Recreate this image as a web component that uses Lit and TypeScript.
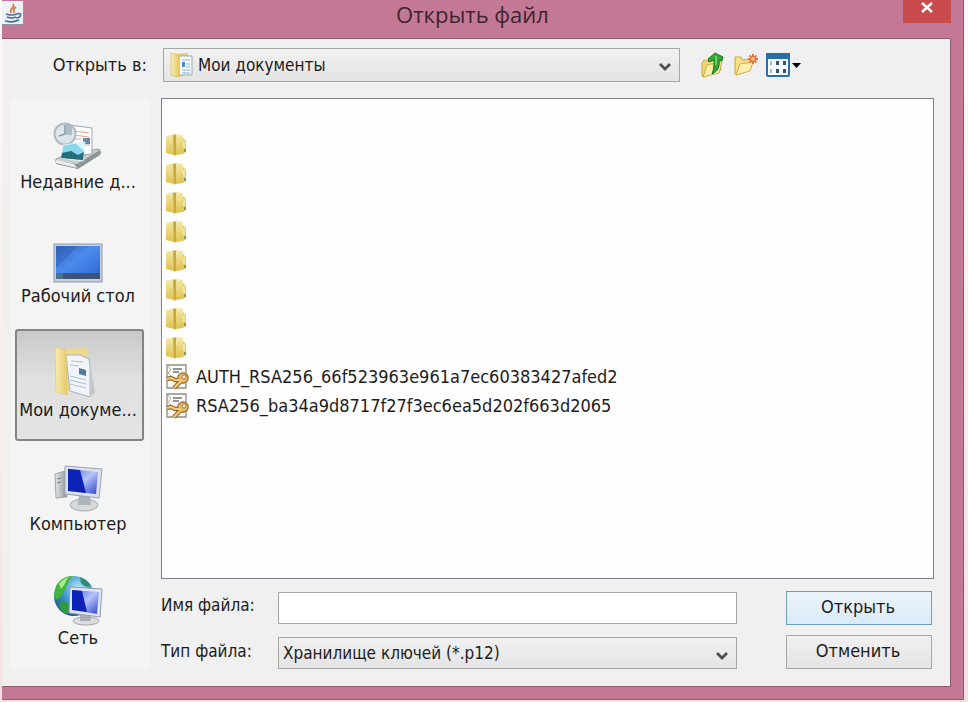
import { LitElement, html, css, svg } from "lit";
import { customElement, state } from "lit/decorators.js";

const defs = html`<svg class="defs" width="0" height="0" aria-hidden="true">
  <defs>
    <linearGradient id="gold" x1="0" x2="1" y1="0" y2="0">
      <stop offset="0" stop-color="#f9edb4" /><stop offset="1" stop-color="#e8ca66" />
    </linearGradient>
    <linearGradient id="screen" x1="0" x2="1" y1="0" y2="1">
      <stop offset="0" stop-color="#3a68c0" /><stop offset=".45" stop-color="#4b8bee" /><stop offset="1" stop-color="#2a63cf" />
    </linearGradient>
    <linearGradient id="glass" x1="0" x2="1" y1="0" y2="1">
      <stop offset="0" stop-color="#4a66dc" /><stop offset=".5" stop-color="#b4c4f8" /><stop offset="1" stop-color="#2d44cc" />
    </linearGradient>
    <linearGradient id="steel" x1="0" x2="1" y1="0" y2="0">
      <stop offset="0" stop-color="#e8eaec" /><stop offset="1" stop-color="#8b9196" />
    </linearGradient>
    <linearGradient id="flap" x1="0" x2="0" y1="0" y2="1">
      <stop offset="0" stop-color="#f4eaa8" /><stop offset="1" stop-color="#dfc04e" />
    </linearGradient>
    <radialGradient id="sea" cx=".6" cy=".3" r=".75">
      <stop offset="0" stop-color="#b4e8fa" /><stop offset=".5" stop-color="#4397cf" /><stop offset="1" stop-color="#17548f" />
    </radialGradient>
  </defs>
</svg>`;

const recentArt = svg`
  <path d="M3 41 16 35 46 31 48 35 24 50 3 45Z" fill="#c9cdcf" stroke="#9a9ea0"/>
  <path d="M24 46 47 32V37L25 51 3 46V43Z" fill="#8f9496"/>
  <path d="M16 7 39 10 39 36 20 38Z" fill="#fbfdfe" stroke="#9cabb5"/>
  <path d="M21 13 36 15M21 17 36 19M22 21 28 21M30 27 37 27" stroke="#e2a58c"/>
  <path d="M30 20h7v6h-7z" fill="#6788a4"/>
  <circle cx="12" cy="16" r="10.5" fill="#dde5ea" stroke="#b0bac1" stroke-width="2"/>
  <path d="M12 7V16L6 18" fill="none" stroke="#8e9eaa" stroke-width="1.6"/>
  <path d="M13 6A10 10 0 0 1 19 9V17H13Z" fill="#7f97a6" opacity=".5"/>
  <path d="M10 27 32 24 30 43 8 40Z" fill="#8bd5ed" stroke="#e3f4fa"/>
  <path d="M9 35 18 33 25 37 31 34 30 42 8 40Z" fill="#246e75"/>
  <path d="M22 25 31 24 31 33Z" fill="#d7f5fc"/>
  <path d="M3 42 21 46 24 50 3 45Z" fill="#e9ebec"/>`;

const desktopArt = svg`
  <rect x="1" y="12" width="48" height="38" fill="#c8d0dc" stroke="#8f99a9"/>
  <rect x="3" y="14" width="44" height="33" fill="url(#screen)"/>
  <path d="M3 14H25L3 36Z" fill="#234f9e" opacity=".3"/>
  <rect x="3" y="41" width="44" height="6" fill="#3d5478"/>
  <rect x="3" y="41" width="7" height="6" fill="#4f708e"/>`;

const documentsArt = svg`
  <path d="M8 3 35 2V10L24 45 7 44Z" fill="#ecd78c"/>
  <path d="M13 9 27 9 36 13 37 21V51L17 45Z" fill="#f1f5f9" stroke="#a7b6be"/>
  <path d="M18 15 30 16M17 19 26 20M17 30 33 34M17 34 33 38M17 38 33 42" stroke="#aebfcc"/>
  <path d="M26 22 33 24V30L26 28Z" fill="#527b93"/>
  <path d="M2 1 13 4 14 49 3 46Z" fill="url(#gold)" stroke="#dcc376" stroke-width=".6"/>
  <path d="M38 24 42 46 38 51Z" fill="#777" opacity=".25"/>`;

const computerArt = svg`
  <path d="M2 14 12 11 14 37 3 38Z" fill="url(#steel)" stroke="#a1a6aa"/>
  <path d="M4 19 8 18M4 23 8 22" stroke="#70777c"/>
  <ellipse cx="31" cy="45" rx="14" ry="6" fill="#d7dadd" stroke="#a4a9ad"/>
  <path d="M26 35 37 37 38 45H25Z" fill="#aeb3b8"/>
  <path d="M12 6 49 9 46 38 12 34Z" fill="#dce1ec" stroke="#9aa3b8"/>
  <path d="M15 9 45 12 43 34 15 31Z" fill="url(#glass)"/>
  <path d="M15 9 27 10 33 33 15 31Z" fill="#0d22b6"/>`;

const networkArt = svg`
  <circle cx="21" cy="22" r="20" fill="url(#sea)"/>
  <path d="M3 12C7 5 13 2 20 2 18 5 14 6 15 10 11 14 12 19 7 23 4 27 2 26 1 22Z" fill="#43b53b"/>
  <path d="M6 29C11 26 16 28 17 33 15 37 16 41 13 40 8 37 6 34 6 29Z" fill="#2c9a3d"/>
  <path d="M27 3C32 5 36 8 38 12 33 14 30 11 28 9Z" fill="#318c74"/>
  <path d="M6 10C9 6 12 4 16 3 12 7 13 10 8 15Z" fill="#a4ed88"/>
  <ellipse cx="33" cy="47" rx="13" ry="4" fill="#dadcdf" stroke="#a5a9ad"/>
  <path d="M27 40 37 41 38 47H27Z" fill="#aaafb4"/>
  <path d="M17 13 49 15 47 43 16 39Z" fill="#e0e5ef" stroke="#929cb1"/>
  <path d="M19 16 46 18 44 40 19 36Z" fill="url(#glass)"/>
  <path d="M19 16 29 17 34 38 19 36Z" fill="#0d22b6"/>`;

const folderIcon = html`<svg class="file-icon" viewBox="0 0 24 26" aria-hidden="true">
  <path d="M1 4 9 2V23L1 21Z" fill="url(#flap)"/>
  <path d="M8 3 12 2V22L9 24Z" fill="#c9a83e"/>
  <path d="M11 2 18 3V22L11 23Z" fill="url(#flap)"/>
  <path d="M18 6 21 9V20L18 22Z" fill="#e3ca66"/>
  <path d="M19 9V16" stroke="#f8f0bc" stroke-width="1.4"/>
  <path d="M20 17V20" stroke="#6d8b4c" stroke-width="1.5"/>
</svg>`;

const keyIcon = html`<svg class="file-icon" viewBox="0 0 24 26" aria-hidden="true">
  <path d="M2 1H21V24H2Z" fill="#fbfbf8" stroke="#8f8c80" stroke-width="1.3"/>
  <path d="M8 5H17M8 8H14" stroke="#6f757a" stroke-width="1.3"/>
  <path d="M3 2 6 6 3 9 6 12" fill="none" stroke="#b2b2aa"/>
  <path d="M2 15 6 14 10 16 15 16M9 24 17 16" fill="none" stroke="#94662c" stroke-width="4.4" stroke-linejoin="round"/>
  <circle cx="18" cy="14" r="5.200" fill="#eab964" stroke="#94662c" stroke-width="1.2"/>
  <path d="M2 15 6 14 10 16 15 16M9 24 17 16" fill="none" stroke="#f3c97c" stroke-width="2.2"/>
  <circle cx="19" cy="13" r="2" fill="#fff5d8" stroke="#94662c" stroke-width=".8"/>
</svg>`;

const chevron = html`<svg class="chevron" viewBox="0 0 12 10" aria-hidden="true">
  <path d="M1 2 6 7 11 2" fill="none" stroke="#505050" stroke-width="2.8"/>
</svg>`;

interface Place {
  id: string;
  label: string;
  art: unknown;
}

const places: Place[] = [
  { id: "recent", label: "Недавние д...", art: recentArt },
  { id: "desktop", label: "Рабочий стол", art: desktopArt },
  { id: "documents", label: "Мои докуме...", art: documentsArt },
  { id: "computer", label: "Компьютер", art: computerArt },
  { id: "network", label: "Сеть", art: networkArt },
];

const files = [
  "AUTH_RSA256_66f523963e961a7ec60383427afed2",
  "RSA256_ba34a9d8717f27f3ec6ea5d202f663d2065",
];

@customElement("app-root")
export class AppRoot extends LitElement {
  @state() private place = "documents";

  static styles = css`
    :host {
      display: flex;
      box-sizing: border-box;
      min-height: 100vh;
      padding: 0 4px 4px 2px;
      background: linear-gradient(#fdf8fa, #fdf0ee 40%, #f8e0df);
      color: #1c1c1c;
      font: 17px/20px "DejaVu Sans Condensed", "Noto Sans", sans-serif;
    }
    * { box-sizing: border-box; }
    button, input, select { font: inherit; color: inherit; margin: 0; border-radius: 0; }
    .defs { position: absolute; }
    .window {
      flex: 1;
      min-width: 0;
      display: flex;
      flex-direction: column;
      padding: 0 12px 12px 0;
      background: #c37895;
      border: solid #8f5b70;
      border-width: 0 1px 1px 0;
    }
    .titlebar {
      display: grid;
      grid-template-columns: 48px 1fr 48px;
      align-items: start;
      height: 38px;
    }
    .java { width: 22px; height: 25px; }
    .title {
      margin: 0;
      padding-right: 8px;
      font: 22px/28px "Open Sans", sans-serif;
      text-align: center;
      color: #3b2630;
    }
    .close {
      height: 23px;
      padding: 0;
      border: 0;
      background: #c94b4e;
      display: flex;
      justify-content: center;
    }
    .close svg { width: 14px; height: 16px; }
    .client {
      flex: 1;
      display: grid;
      grid-template-columns: 138px 1fr;
      grid-template-rows: 34px 1fr;
      column-gap: 12px;
      row-gap: 16px;
      padding: 9px 16px 17px 9px;
      background: #f0f0f0;
      border: solid #8f5b70;
      border-width: 1px 1px 1px 0;
    }
    .look-label { align-self: center; text-align: right; padding-right: 2px; font-size: 18px; }
    .toolbar { display: flex; align-items: center; padding-left: 2px; }
    .combo { position: relative; flex: 1; height: 34px; }
    .combo select {
      width: 100%;
      height: 100%;
      padding: 0 36px 0 4px;
      appearance: none;
      border: 1px solid #a6a6a6;
      background: linear-gradient(#f1f1f1, #e4e4e4);
    }
    .combo .with-icon { padding-left: 34px; }
    .combo-icon { position: absolute; left: 7px; top: 4px; width: 25px; height: 26px; pointer-events: none; }
    .chevron { position: absolute; right: 9px; top: 14px; width: 12px; height: 10px; pointer-events: none; }
    .tools { display: flex; align-items: center; gap: 8px; width: 254px; padding-left: 20px; }
    .tool { padding: 0; border: 0; background: none; display: flex; }
    .tool svg { width: 25px; height: 26px; }
    .tool .wide { width: 36px; }
    .places {
      display: flex;
      flex-direction: column;
      gap: 2px;
      padding: 3px 5px 0 4px;
      background: #f4f4f4;
    }
    .place {
      display: flex;
      flex-direction: column;
      align-items: center;
      gap: 2px;
      height: 112px;
      padding: 16px 3px 0 0;
      border: 1px solid transparent;
      background: none;
      font-size: 18px;
      white-space: nowrap;
    }
    .place svg { width: 50px; height: 52px; }
    .place.selected {
      border: 2px solid #858585;
      padding-top: 15px;
      border-radius: 3px;
      background: linear-gradient(#c9c9c9, #e0e0e0 45%, #e4e4e4);
    }
    .main { display: flex; flex-direction: column; gap: 12px; min-width: 0; }
    .files {
      flex: 1;
      margin: 0;
      padding: 31px 3px;
      list-style: none;
      background: #fefefe;
      border: 1px solid #7d8087;
      font-size: 18px;
    }
    .file { display: flex; align-items: center; gap: 7px; height: 29px; }
    .file-icon { width: 24px; height: 26px; }
    .form { display: flex; gap: 49px; padding-right: 2px; }
    .fields {
      flex: 1;
      display: grid;
      grid-template-columns: 117px 1fr;
      grid-template-rows: 34px 32px;
      row-gap: 12px;
      align-items: center;
    }
    .fields label { align-self: start; padding-top: 4px; }
    .fields .combo { height: 32px; }
    .fields input { width: 100%; height: 32px; padding: 0 5px; border: 1px solid #a6a6a6; background: #fff; }
    .actions { display: flex; flex-direction: column; gap: 10px; width: 146px; }
    .action { height: 34px; padding: 0 2px 2px 0; border: 1px solid #a6a6a6; background: linear-gradient(#f1f1f1, #e4e4e4); font-size: 18px; }
    .action.primary { border-color: #6f9fba; background: linear-gradient(#ecf4fa, #d9ebf7); }
  `;

  render() {
    return html`${defs}
      <main class="window">
        <header class="titlebar">
          <svg class="java" viewBox="0 0 22 25" aria-hidden="true">
            <path d="M0 1H22V25H0Z" fill="#edf2f6" />
            <path d="M22 1V25H0" fill="none" stroke="#75788a" stroke-width="1.5" />
            <path d="M11 4C14 7 7 8 9 13M14 7C10 9 12 11 12 13" fill="none" stroke="#db7838" stroke-width="1.6" />
            <path d="M4 14Q9 16 15 14M5 17Q10 19 14 17M3 21Q10 23 17 20" fill="none" stroke="#426f94" stroke-width="1.7" />
            <path d="M15 14C21 12 19 18 14 18" fill="none" stroke="#426f94" stroke-width="1.5" />
          </svg>
          <h1 class="title">Открыть файл</h1>
          <button class="close" aria-label="Закрыть">
            <svg viewBox="0 0 14 16" aria-hidden="true"><path d="M2 3 12 12M12 3 2 12" stroke="#fff" stroke-width="2.4" /></svg>
          </button>
        </header>
        <div class="client">
          <label class="look-label" for="look">Открыть в:</label>
          <div class="toolbar">
            <div class="combo">
              <select id="look" class="with-icon"><option>Мои документы</option></select>
              <svg class="combo-icon" viewBox="0 0 25 26" aria-hidden="true">
                <path d="M2 2 18 1V22L9 25 2 24Z" fill="#e8d077" />
                <path d="M9 4 22 4V23H9Z" fill="#f6fafc" stroke="#9aaab4" />
                <path d="M12 8H20M16 12H20M16 15H20M12 18H20M12 21H20" stroke="#8fb0cc" />
                <path d="M12 10H15V15H12Z" fill="#4b8cc4" />
                <path d="M1 1 9 3V25L1 23Z" fill="url(#gold)" stroke="#d5b856" stroke-width=".6" />
              </svg>
              ${chevron}
            </div>
            <div class="tools">
              <button class="tool" aria-label="На один уровень вверх">
                <svg viewBox="0 0 25 26" aria-hidden="true">
                  <path d="M2 11 4 8 8 9 10 7 20 6 21 18 4 25 2 24Z" fill="#f2d778" stroke="#c9a443" />
                  <path d="M3 25 7 13 22 10 19 21Z" fill="#fbedaa" stroke="#cfab4b" />
                  <path d="M8 7 15 1 23 5 22 9 19 8C20 15 18 19 12 22 14 17 14 13 14 8L9 10Z" fill="#37a534" stroke="#167826" />
                  <path d="M16 4V13" stroke="#7cdc70" stroke-width="1.6" />
                </svg>
              </button>
              <button class="tool" aria-label="Создать папку">
                <svg viewBox="0 0 25 26" aria-hidden="true">
                  <path d="M2 5H8L10 8 17 7V12L4 23 2 22Z" fill="#f5de8a" stroke="#c9a443" />
                  <path d="M3 23 7 12 20 10 17 19Z" fill="#fcefae" stroke="#d3ad4c" />
                  <path d="M20 2V12M15 7H25M16.500 3.500 23.500 10.500M23.500 3.500 16.500 10.500" stroke="#e4753f" stroke-width="2" />
                  <circle cx="20" cy="7" r="1.8" fill="#ffc27a" />
                </svg>
              </button>
              <button class="tool" aria-label="Вид">
                <svg class="wide" viewBox="0 0 36 26" aria-hidden="true">
                  <rect x="1" y="2" width="22" height="22" rx="1" fill="#f7fbff" stroke="#256fac" stroke-width="2" />
                  <rect x="0" y="1" width="24" height="6" rx="1" fill="#256fac" />
                  <path d="M5 9V13M5 17V21" stroke="#8da5a5" stroke-width="1.5" />
                  <path d="M10 9H13V13H10ZM17 9H20V13H17ZM10 17H13V21H10ZM17 17H20V21H17Z" fill="#34576b" />
                  <path d="M26 11H35L30.500 16Z" fill="#000" />
                </svg>
              </button>
            </div>
          </div>
          <nav class="places">
            ${places.map(
              (p) => html`<button
                class="place ${p.id === this.place ? "selected" : ""}"
                @click=${() => (this.place = p.id)}
              >
                <svg viewBox="0 0 50 52" aria-hidden="true">${p.art}</svg>
                <span>${p.label}</span>
              </button>`
            )}
          </nav>
          <div class="main">
            <ul class="files">
              ${Array.from({ length: 8 }, () => html`<li class="file">${folderIcon}</li>`)}
              ${files.map((f) => html`<li class="file">${keyIcon}<span>${f}</span></li>`)}
            </ul>
            <form class="form" @submit=${(e: Event) => e.preventDefault()}>
              <div class="fields">
                <label for="name">Имя файла:</label>
                <input id="name" type="text" />
                <label for="kind">Тип файла:</label>
                <div class="combo">
                  <select id="kind"><option>Хранилище ключей (*.p12)</option></select>
                  ${chevron}
                </div>
              </div>
              <div class="actions">
                <button class="action primary" type="submit">Открыть</button>
                <button class="action" type="button">Отменить</button>
              </div>
            </form>
          </div>
        </div>
      </main>`;
  }
}
